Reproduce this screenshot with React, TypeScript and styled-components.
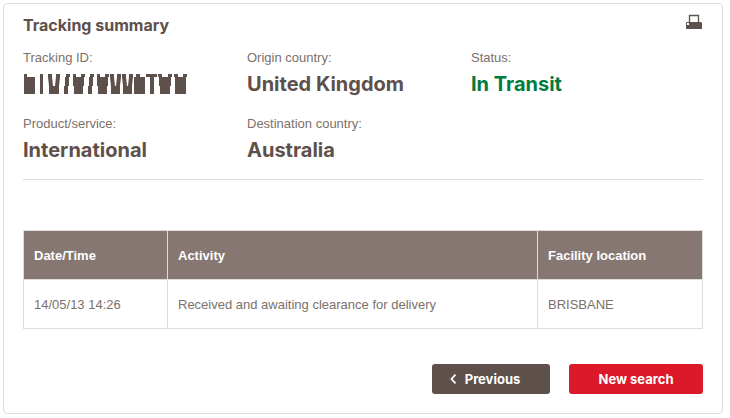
import React from "react";
import styled, { createGlobalStyle } from "styled-components";

const GlobalStyle = createGlobalStyle`
  * { box-sizing: border-box; }
  body {
    margin: 0;
    background: #fff;
    color: #7c706b;
    font-family: "Liberation Sans", Arial, sans-serif;
    font-size: 13px;
    line-height: 16px;
  }
`;

const brandFont = `Inter, "Open Sans", sans-serif`;

const Card = styled.main`
  margin: 3px 7px 4px 3px;
  padding: 10px 19px 19px;
  border: 1px solid #deddda;
  border-radius: 4px;
`;

const CardHeader = styled.header`
  display: flex;
  align-items: flex-start;
  justify-content: space-between;
`;

const Title = styled.h1`
  margin: 0;
  color: #5e504b;
  font: 700 16px/23px ${brandFont};
`;

const PrintButton = styled.button`
  display: block;
  padding: 0;
  border: 0;
  background: none;
  cursor: pointer;

  svg { display: block; }
`;

const Summary = styled.dl`
  display: grid;
  grid-template-columns: 224px 224px 1fr;
  row-gap: 18px;
  margin: 0;
  padding: 13px 0 15px;
  border-bottom: 1px solid #deddda;
`;

const Label = styled.dt`
  margin: 0;
`;

const Value = styled.dd<{ $positive?: boolean }>`
  display: flex;
  align-items: center;
  height: 28px;
  margin: 4px 0 0;
  color: ${(p) => (p.$positive ? "#007b40" : "#5e504b")};
  font: 700 20px/28px ${brandFont};
`;

const Table = styled.table`
  width: 100%;
  margin-top: 50px;
  border-collapse: collapse;
  table-layout: fixed;
`;

const DateColumn = styled.col`
  width: 144px;
`;

const FacilityColumn = styled.col`
  width: 165px;
`;

const HeadCell = styled.th`
  height: 49px;
  padding: 2px 10px 0;
  border: 1px solid #deddda;
  background: #867772;
  color: #fff;
  text-align: left;
`;

const Cell = styled.td`
  height: 49px;
  padding: 2px 10px 0;
  border: 1px solid #deddda;
`;

const Actions = styled.div`
  display: flex;
  justify-content: flex-end;
  gap: 19px;
  margin-top: 35px;
`;

const ActionButton = styled.button<{ $primary?: boolean }>`
  display: flex;
  align-items: center;
  justify-content: center;
  gap: 8px;
  width: ${(p) => (p.$primary ? "134px" : "118px")};
  height: 30px;
  padding: ${(p) => (p.$primary ? "0" : "0 12px 0 0")};
  border: 0;
  border-radius: 3px;
  background: ${(p) => (p.$primary ? "#dc1928" : "#5e504b")};
  color: #fff;
  font: 700 13px/16px ${brandFont};
  cursor: pointer;
`;

const PrinterIcon = () => (
  <svg width="18" height="18" viewBox="0 0 18 18" aria-hidden="true">
    <path d="M4.500 8.500v-7h9v7" fill="none" stroke="#5e504b" strokeWidth="1.300" />
    <path d="M2 8h14l1 1v6H1V9z" fill="#5e504b" />
    <path d="M2 9h2v2H2z" fill="#fff" />
  </svg>
);

const HiddenId = () => (
  <svg width="166" height="20" viewBox="0 0 166 20" role="img" aria-label="Hidden tracking ID">
    <g fill="#5e504b">
      <path d="M1 0h3v3h8v17H1z" />
      <path d="M17 0h3v20h-3z" />
      <path d="M25 0h4v3l1 9h2l1-9V0h4v3l-1 9v8H26v-8l-1-9z" />
      <path d="M43 0h4v3h-1v9h-1v8h-4v-8h1V3h1z" />
      <path d="M50 0h3v3h5V0h4v3h-1v9h-1v8h-9v-8h-1z" />
      <path d="M67 0h4v3h-1v9h-1v8h-4v-8h1V3h1z" />
      <path d="M74 0h3v3h5V0h4v3h-1v9h-1v8h-9v-8h-1z" />
      <path d="M87 0h4v3l1 9h1l1-9V0h4v3l-1 9v8h-9v-8l-1-9z" />
      <path d="M99 0h4v3l1 9h1l1-9V0h4v3l-1 9v8h-9v-8l-1-9z" />
      <path d="M113 0h4v3h5v17h-11V3h2z" />
      <path d="M123 0h11v3h-3v17h-4V3h-4z" />
      <path d="M135 0h4v3h6V0h4v3h-1v9h-1v8h-10v-8h-1V3h-1z" />
      <path d="M151 0h4v3h5V0h4v3h-1v17h-11V3h-1z" />
    </g>
  </svg>
);

const ChevronLeft = () => (
  <svg width="7" height="10" viewBox="0 0 7 10" aria-hidden="true">
    <path d="M5.500 .7 1.500 5l4 4.300" fill="none" stroke="#fff" strokeWidth="1.800" />
  </svg>
);

interface FieldProps {
  label: string;
  positive?: boolean;
  children: React.ReactNode;
}

const Field = ({ label, positive, children }: FieldProps) => (
  <div>
    <Label>{label}</Label>
    <Value $positive={positive}>{children}</Value>
  </div>
);

export default function App() {
  return (
    <>
      <GlobalStyle />
      <Card>
        <CardHeader>
          <Title>Tracking summary</Title>
          <PrintButton type="button" aria-label="Print">
            <PrinterIcon />
          </PrintButton>
        </CardHeader>
        <Summary>
          <Field label="Tracking ID:"><HiddenId /></Field>
          <Field label="Origin country:">United Kingdom</Field>
          <Field label="Status:" positive>In Transit</Field>
          <Field label="Product/service:">International</Field>
          <Field label="Destination country:">Australia</Field>
        </Summary>
        <Table>
          <colgroup>
            <DateColumn />
            <col />
            <FacilityColumn />
          </colgroup>
          <thead>
            <tr>
              <HeadCell scope="col">Date/Time</HeadCell>
              <HeadCell scope="col">Activity</HeadCell>
              <HeadCell scope="col">Facility location</HeadCell>
            </tr>
          </thead>
          <tbody>
            <tr>
              <Cell>14/05/13 14:26</Cell>
              <Cell>Received and awaiting clearance for delivery</Cell>
              <Cell>BRISBANE</Cell>
            </tr>
          </tbody>
        </Table>
        <Actions>
          <ActionButton type="button">
            <ChevronLeft />
            Previous
          </ActionButton>
          <ActionButton type="button" $primary>New search</ActionButton>
        </Actions>
      </Card>
    </>
  );
}
